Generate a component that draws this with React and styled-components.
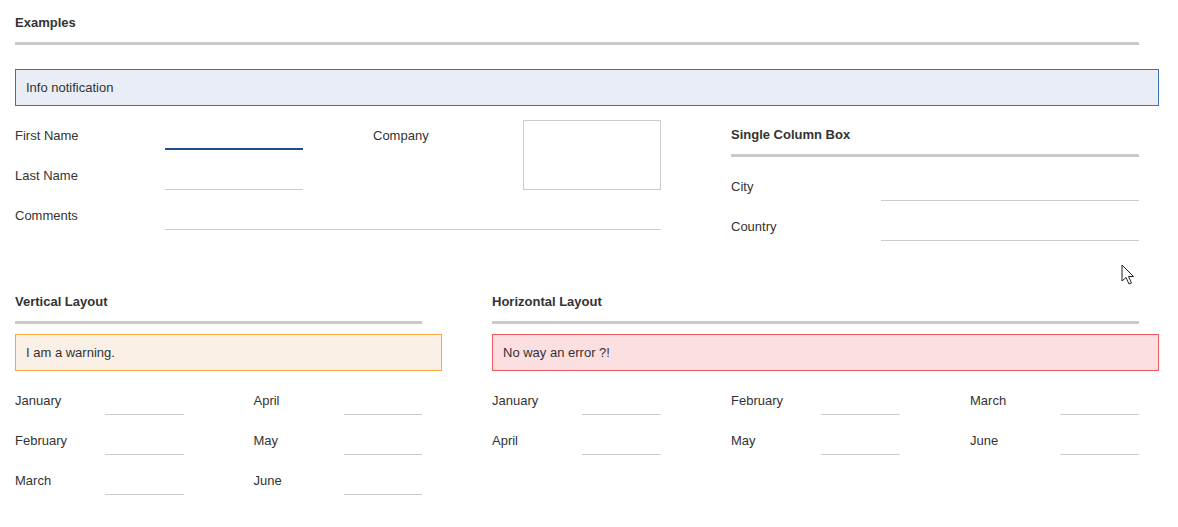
import React from 'react';
import styled, { createGlobalStyle } from 'styled-components';

const GlobalStyle = createGlobalStyle`
  body {
    margin: 0;
    background: #fff;
    font-family: "Liberation Sans", Arial, sans-serif;
    font-size: 13px;
    color: #333;
  }
`;

const Page = styled.div`
  position: relative;
  width: 1144px;
  padding: 8px 19px 0 15px;
`;

const Heading = styled.div`
  font-weight: bold;
  font-size: 13px;
  line-height: 28px;
  padding-top: 1px;
  padding-bottom: 5px;
  border-bottom: 3px solid #cacaca;
  margin-right: ${p => (p.$flush ? 0 : 20)}px;
  margin-bottom: ${p => p.gap || 0}px;
`;

const tones = {
  info: { bg: '#e9eef6', border: '#3f72b5' },
  warning: { bg: '#faf0e6', border: '#f5a742' },
  error: { bg: '#fcdfe1', border: '#ef5a5f' },
};

const Notification = styled.div`
  height: 35px;
  line-height: 35px;
  padding: 0 10px;
  background: ${p => tones[p.tone].bg};
  border: 1px solid ${p => tones[p.tone].border};
  margin-bottom: ${p => p.gap || 0}px;
`;

const TopRow = styled.div`
  display: flex;
  gap: 70px;
  padding-right: 20px;
`;

const FormGrid = styled.div`
  display: grid;
  grid-template-columns: 150px 138px 70px 150px 138px;
  grid-template-rows: repeat(3, 30px);
  row-gap: 10px;
`;

const Label = styled.label`
  height: 30px;
  line-height: 32px;
  white-space: nowrap;
  grid-column: ${p => p.col || 'auto'};
  grid-row: ${p => p.row || 'auto'};
`;

const Input = styled.input`
  box-sizing: border-box;
  height: 30px;
  width: 100%;
  border: none;
  border-bottom: ${p => (p.$active ? '2px solid #1f4e8c' : '1px solid #cccccc')};
  background: transparent;
  outline: none;
  padding: 0;
  grid-column: ${p => p.col || 'auto'};
  grid-row: ${p => p.row || 'auto'};
`;

const TextArea = styled.textarea`
  box-sizing: border-box;
  width: 100%;
  height: 70px;
  border: 1px solid #cccccc;
  resize: none;
  outline: none;
  grid-column: 5;
  grid-row: 1 / span 2;
`;

const SingleColumn = styled.div`
  width: 408px;
`;

const FieldList = styled.div`
  display: grid;
  grid-template-columns: 150px 1fr;
  grid-auto-rows: 30px;
  row-gap: 10px;
`;

const BottomRow = styled.div`
  display: grid;
  grid-template-columns: 427px 667px;
  column-gap: 50px;
  margin-top: 46px;
`;

const MonthGrid = styled.div`
  display: grid;
  grid-template-columns: repeat(${p => p.cols}, 1fr);
  grid-auto-rows: 30px;
  column-gap: 70px;
  row-gap: 10px;
  padding-right: 20px;
`;

const MonthField = styled.div`
  display: grid;
  grid-template-columns: 90px 1fr;
`;

const Cursor = styled.svg`
  position: absolute;
  left: 1121px;
  top: 264px;
`;

const Field = ({ label, active }) => (
  <MonthField>
    <Label>{label}</Label>
    <Input $active={active} />
  </MonthField>
);

const verticalMonths = ['January', 'April', 'February', 'May', 'March', 'June'];
const horizontalMonths = ['January', 'February', 'March', 'April', 'May', 'June'];

export default function App() {
  return (
    <Page>
      <GlobalStyle />
      <Heading gap={24}>Examples</Heading>
      <Notification tone="info" gap={14}>Info notification</Notification>

      <TopRow>
        <FormGrid>
          <Label col="1" row="1">First Name</Label>
          <Input col="2" row="1" $active />
          <Label col="4" row="1">Company</Label>
          <TextArea />
          <Label col="1" row="2">Last Name</Label>
          <Input col="2" row="2" />
          <Label col="1" row="3">Comments</Label>
          <Input col="2 / span 4" row="3" />
        </FormGrid>

        <SingleColumn>
          <Heading gap={14} $flush>Single Column Box</Heading>
          <FieldList>
            <Label>City</Label>
            <Input />
            <Label>Country</Label>
            <Input />
          </FieldList>
        </SingleColumn>
      </TopRow>

      <BottomRow>
        <div>
          <Heading gap={10}>Vertical Layout</Heading>
          <Notification tone="warning" gap={14}>I am a warning.</Notification>
          <MonthGrid cols={2}>
            {verticalMonths.map(m => <Field key={m} label={m} />)}
          </MonthGrid>
        </div>
        <div>
          <Heading gap={10}>Horizontal Layout</Heading>
          <Notification tone="error" gap={14}>No way an error ?!</Notification>
          <MonthGrid cols={3}>
            {horizontalMonths.map(m => <Field key={m} label={m} />)}
          </MonthGrid>
        </div>
      </BottomRow>

      <Cursor width="14" height="22" viewBox="0 0 14 22">
        <path d="M1 1 L1 17 L5 13.5 L8 20 L10.5 19 L7.5 12.5 L12.5 12.5 Z" fill="#fff" stroke="#222" strokeWidth="1" strokeLinejoin="round" />
      </Cursor>
    </Page>
  );
}
